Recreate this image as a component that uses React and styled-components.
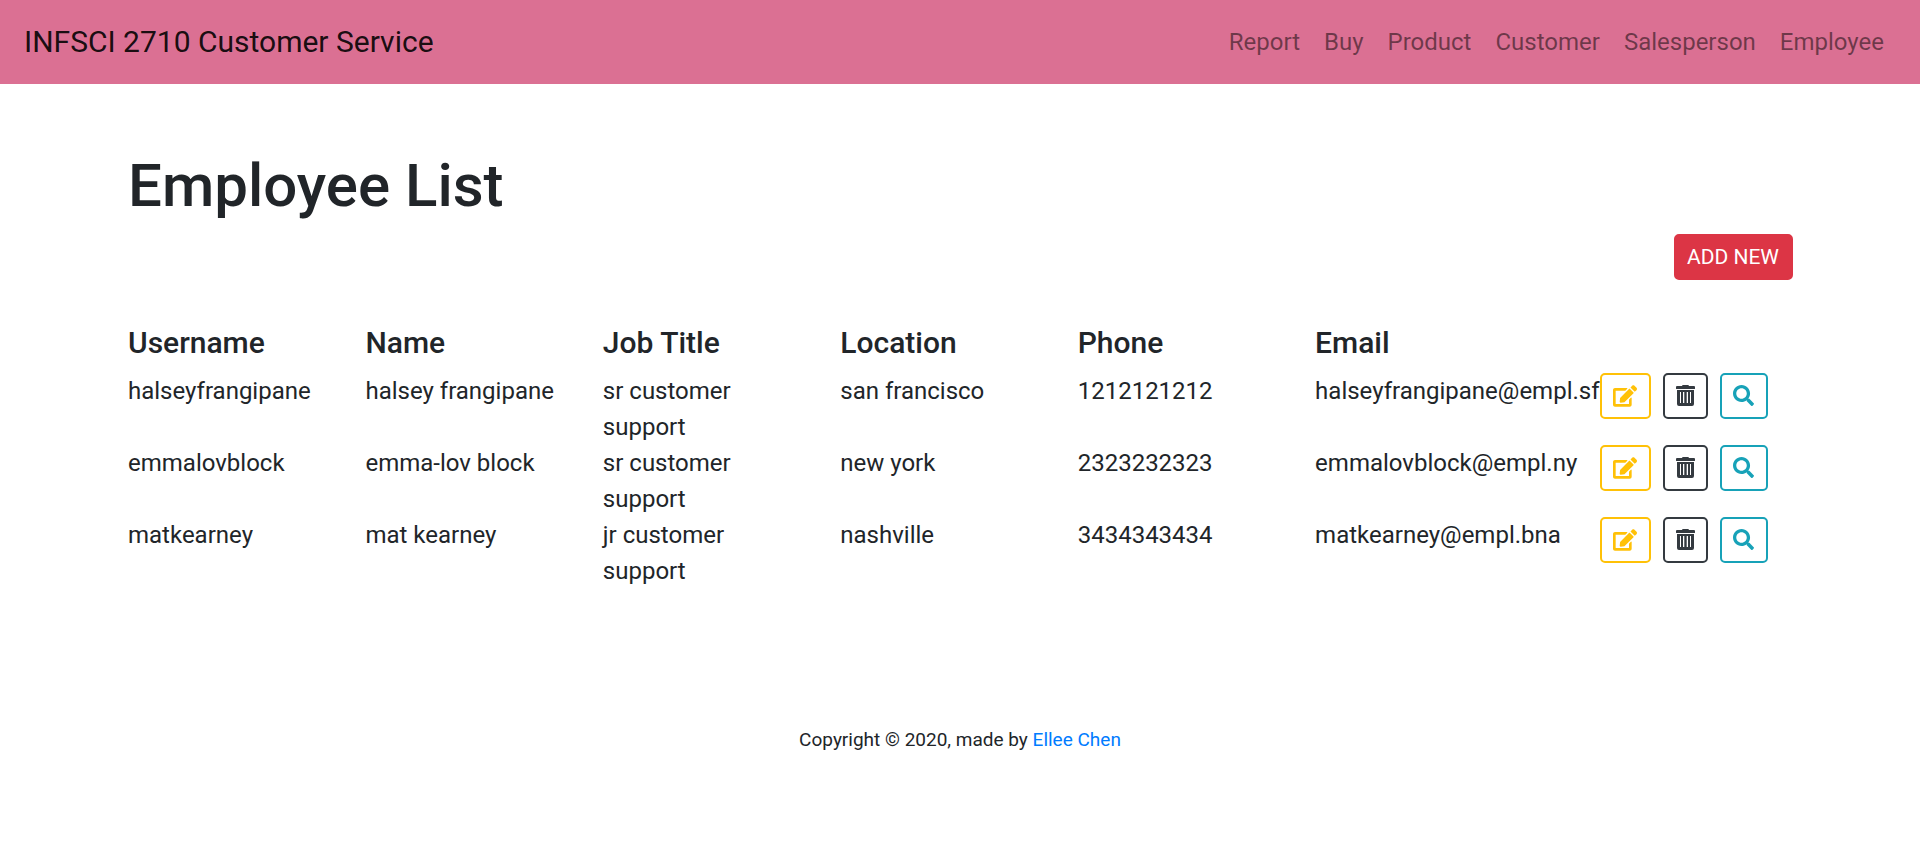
import React from "react";
import styled, { createGlobalStyle } from "styled-components";
import { FaEdit, FaSearch } from "react-icons/fa";

const GlobalStyle = createGlobalStyle`
  *, *::before, *::after { box-sizing: border-box; }
  body {
    margin: 0;
    background: #fff;
    color: #212529;
    font-family: Roboto, "Liberation Sans", sans-serif;
    font-size: 24px;
    line-height: 36px;
  }
`;

const Navbar = styled.nav`
  display: flex;
  align-items: center;
  justify-content: space-between;
  padding: 12px 24px;
  background: #db7093;
`;

const Brand = styled.a`
  padding: 8px 0;
  font-size: 30px;
  line-height: 44px;
  color: rgba(0, 0, 0, 0.9);
  text-decoration: none;
`;

const NavList = styled.ul`
  display: flex;
  margin: 0;
  padding: 0;
  list-style: none;
`;

const NavLink = styled.a`
  display: block;
  padding: 12px;
  color: rgba(0, 0, 0, 0.5);
  text-decoration: none;
`;

const Main = styled.main`
  padding: 66px 127px 0 128px;
`;

const Title = styled.h1`
  margin: 0 0 12px;
  font-size: 60px;
  font-weight: 500;
  line-height: 72px;
`;

const Toolbar = styled.div`
  display: flex;
  justify-content: flex-end;
  margin-bottom: 45px;
`;

const tones = { danger: "#dc3545", warning: "#ffc107", dark: "#343a40", info: "#17a2b8" };

const Button = styled.button`
  display: inline-flex;
  align-items: center;
  justify-content: center;
  height: 46px;
  padding: 0 12px 0 11px;
  border: 2px solid ${(p) => tones[p.$tone]};
  border-radius: 5px;
  background: ${(p) => (p.$solid ? tones[p.$tone] : "transparent")};
  color: ${(p) => (p.$solid ? "#fff" : tones[p.$tone])};
  font: inherit;
  font-size: 21px;
  cursor: pointer;
`;

const Table = styled.table`
  width: 100%;
  table-layout: fixed;
  border-collapse: collapse;
  text-align: left;
`;

const DataCol = styled.col`
  width: 14.26%;
`;

const HeadCell = styled.th`
  padding: 0 0 12px;
  font-size: 30px;
  font-weight: 500;
  line-height: 36px;
`;

const Cell = styled.td`
  padding: 0 40px 0 0;
  vertical-align: top;
  white-space: ${(p) => (p.$nowrap ? "nowrap" : "normal")};
`;

const ActionCell = styled.td`
  padding: 0 0 0 47px;
  vertical-align: top;
`;

const Actions = styled.div`
  display: flex;
  gap: 12px;
`;

const IconButton = styled(Button)`
  width: ${(p) => p.$width}px;
  padding: 0 0 1px;
`;

const Footer = styled.footer`
  padding: 136px 24px 72px;
  text-align: center;
  font-size: 19px;
  line-height: 30px;

  a {
    color: #007bff;
    text-decoration: none;
  }
`;

const TrashIcon = () => (
  <svg width="19" height="21" viewBox="0 0 19 21" fill="currentColor" aria-hidden="true">
    <path d="M1 1h5l.6-1h5.8L13 1h5a1 1 0 0 1 1 1v1.500a.5.5 0 0 1-.5.5H.5a.5.5 0 0 1-.5-.5V2a1 1 0 0 1 1-1z" />
    <path fillRule="evenodd" d="M1 5h17v14a2 2 0 0 1-2 2H3a2 2 0 0 1-2-2zM4 7v11h1V7zm3 0v11h1.300V7zm3.700 0v11H12V7zM14 7v11h1V7z" />
  </svg>
);

const links = ["Report", "Buy", "Product", "Customer", "Salesperson", "Employee"];
const columns = ["Username", "Name", "Job Title", "Location", "Phone", "Email"];
const employees = [
  ["halseyfrangipane", "halsey frangipane", "sr customer support", "san francisco", "1212121212", "halseyfrangipane@empl.sf"],
  ["emmalovblock", "emma-lov block", "sr customer support", "new york", "2323232323", "emmalovblock@empl.ny"],
  ["matkearney", "mat kearney", "jr customer support", "nashville", "3434343434", "matkearney@empl.bna"],
];

export default function App() {
  return (
    <>
      <GlobalStyle />
      <Navbar>
        <Brand href="#">INFSCI 2710 Customer Service</Brand>
        <NavList>
          {links.map((name) => (
            <li key={name}><NavLink href={`#${name.toLowerCase()}`}>{name}</NavLink></li>
          ))}
        </NavList>
      </Navbar>
      <Main>
        <Title>Employee List</Title>
        <Toolbar>
          <Button $tone="danger" $solid>ADD NEW</Button>
        </Toolbar>
        <Table>
          <colgroup>
            {columns.map((name) => <DataCol key={name} />)}
            <col />
          </colgroup>
          <thead>
            <tr>
              {columns.map((name) => <HeadCell key={name} scope="col">{name}</HeadCell>)}
              <td />
            </tr>
          </thead>
          <tbody>
            {employees.map((row) => (
              <tr key={row[0]}>
                {row.map((value, i) => <Cell key={columns[i]} $nowrap={i === 5}>{value}</Cell>)}
                <ActionCell>
                  <Actions>
                    <IconButton $tone="warning" $width={51} aria-label={`Edit ${row[0]}`}><FaEdit size={24} /></IconButton>
                    <IconButton $tone="dark" $width={45} aria-label={`Delete ${row[0]}`}><TrashIcon /></IconButton>
                    <IconButton $tone="info" $width={48} aria-label={`View ${row[0]}`}><FaSearch size={21} /></IconButton>
                  </Actions>
                </ActionCell>
              </tr>
            ))}
          </tbody>
        </Table>
      </Main>
      <Footer>
        Copyright © 2020, made by <a href="#ellee-chen">Ellee Chen</a>
      </Footer>
    </>
  );
}
